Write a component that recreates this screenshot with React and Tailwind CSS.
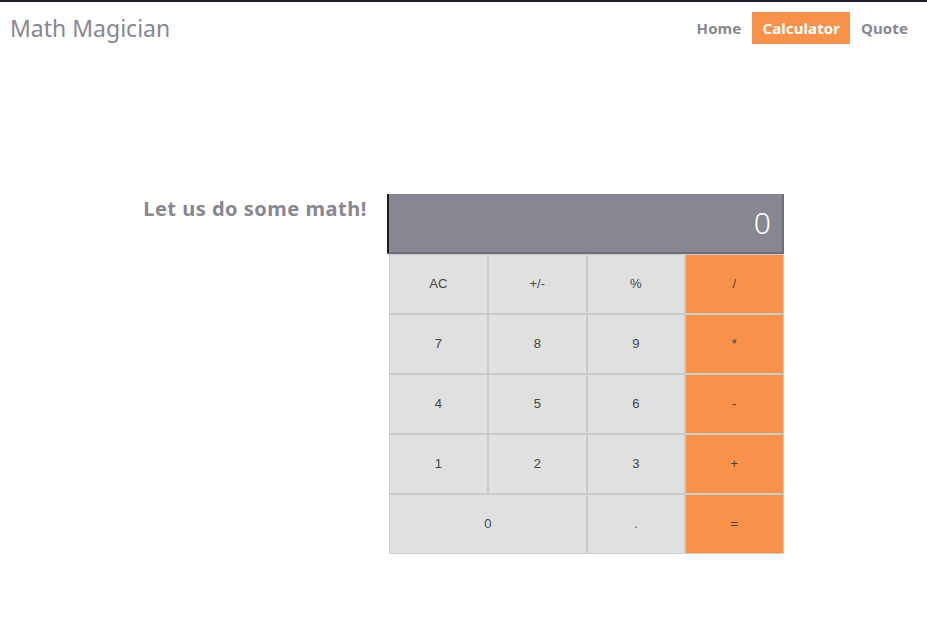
import React, { useState } from 'react';

const keys = [
  { label: 'AC' }, { label: '+/-' }, { label: '%' }, { label: '/', op: true },
  { label: '7' }, { label: '8' }, { label: '9' }, { label: '*', op: true },
  { label: '4' }, { label: '5' }, { label: '6' }, { label: '-', op: true },
  { label: '1' }, { label: '2' }, { label: '3' }, { label: '+', op: true },
  { label: '0', wide: true }, { label: '.' }, { label: '=', op: true },
];

const App = () => {
  const [display] = useState('0');

  return (
    <div className="min-h-[620px] bg-white border-t-2 border-[#1e222a] font-['Noto_Sans',sans-serif]">
      <header className="flex items-center justify-between pl-[10px] pr-[9px] pt-[9px]">
        <h1 className="text-[23px] text-[#878692]">Math Magician</h1>
        <nav className="flex items-center gap-[1px] text-[15px] font-bold text-[#878692] tracking-[0.1px]">
          <a className="px-[10px] py-[5px] leading-[22px]">Home</a>
          <a className="px-[10px] py-[5px] leading-[22px] bg-[#f8914a] text-white">Calculator</a>
          <a className="px-[10px] py-[5px] leading-[22px]">Quote</a>
        </nav>
      </header>

      <main className="flex justify-center items-start gap-[20px] pt-[148px]">
        <h2 className="text-[20px] font-bold text-[#878692] tracking-[0.5px] leading-[30px]">Let us do some math!</h2>
        <div className="w-[397px] font-['Liberation_Sans',Arial,sans-serif]">
          <div className="h-[60px] bg-[#878691] border-l-2 border-l-[#1a1a1a] border-r-2 border-r-[#6f6e78] border-b-2 border-b-[#6f6e78] flex items-center justify-end pr-[11px] text-white text-[30px] font-['Noto_Sans',sans-serif] font-light">
            {display}
          </div>
          <div className="grid grid-cols-[99px_99px_98px_99px] ml-[2px]">
            {keys.map((k) => (
              <button
                key={k.label}
                className={
                  'h-[60px] border border-[#cbcbcb] text-[13px] text-[#444] ' +
                  (k.wide ? 'col-span-2 ' : '') +
                  (k.op ? 'bg-[#f8914a]' : 'bg-[#e0e0e0]')
                }
              >
                {k.label}
              </button>
            ))}
          </div>
        </div>
      </main>
    </div>
  );
};

export default App;
